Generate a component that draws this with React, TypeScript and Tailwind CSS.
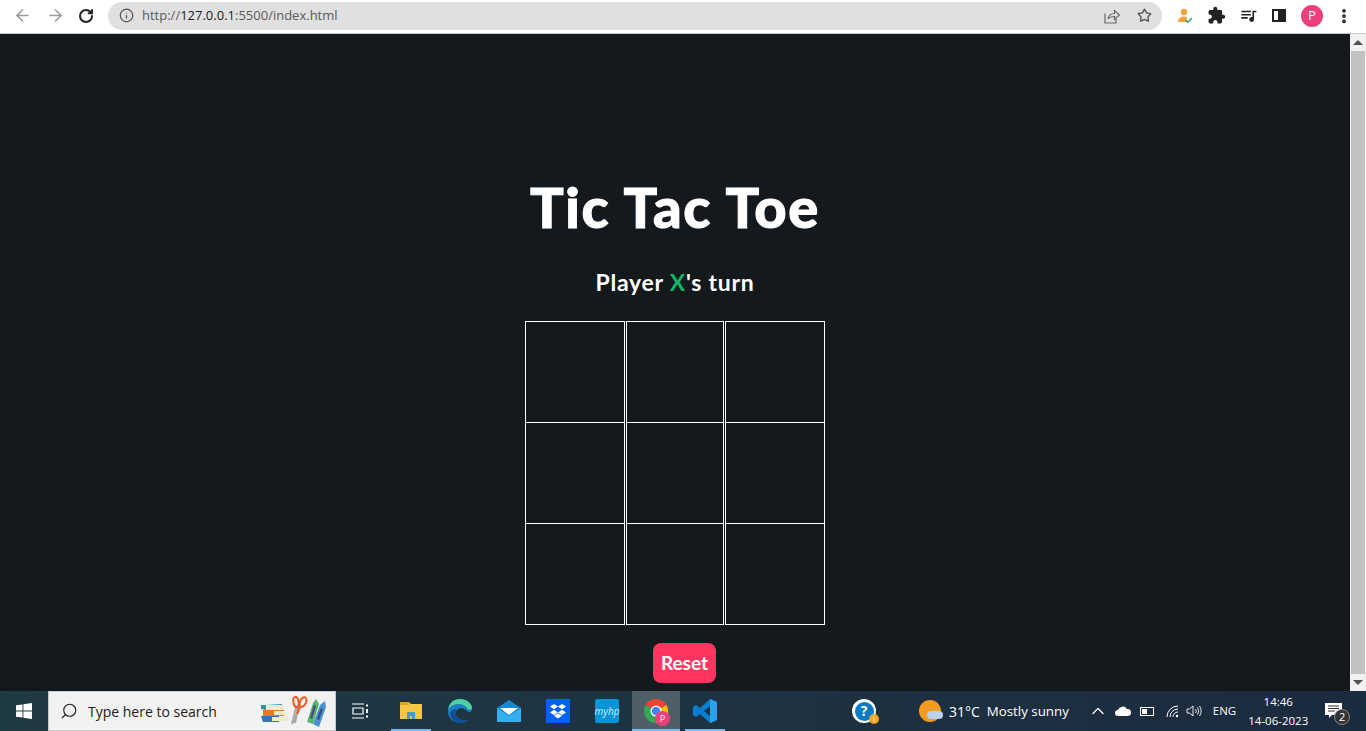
import type { ReactNode } from 'react';
import { ArrowLeft, ArrowRight, RotateCw, Info, Star, EllipsisVertical, Search, ChevronUp } from 'lucide-react';

const cellIds = [0, 1, 2, 3, 4, 5, 6, 7, 8];

const BrowserBar = () => (
  <div className="h-[34px] bg-white flex items-center border-b border-[#c8c8c8] text-[#5f6368] pb-[2px]">
    <div className="flex items-center w-[108px] pl-[13px] gap-[14px]">
      <ArrowLeft size={19} className="text-[#9a9a9a]" />
      <ArrowRight size={19} className="text-[#9a9a9a]" />
      <RotateCw size={16} strokeWidth={3} className="text-[#222] -ml-[1px]" />
    </div>
    <div className="w-[1054px] h-[28px] rounded-full bg-[#e0e0e0] flex items-center pl-[11px] pr-[10px]">
      <Info size={15} className="text-[#555]" />
      <span className="ml-[8px] text-[13px] text-[#5a5a5a]">
        http://<span className="text-[#222]">127.0.0.1</span>:5500/index.html
      </span>
      <svg width="16" height="16" viewBox="0 0 16 16" fill="none" stroke="#666" strokeWidth="1.2" className="ml-auto">
        <path d="M1 5.5v9.5h11v-4" />
        <path d="M4 11c.5-3.5 3-5.5 6.5-5.5V2.5L15.5 7l-5 4.5V8.5C8 8.5 5.5 9 4 11z" />
      </svg>
      <Star size={15} strokeWidth={2.2} className="ml-[17px] text-[#555]" />
    </div>
    <div className="flex items-center flex-1 pl-[14px]">
      <svg width="18" height="18" viewBox="0 0 18 18">
        <circle cx="8" cy="5" r="3.2" fill="#f9a03f" />
        <path d="M2 15c0-4 3-5.5 6-5.5 1 0 2 .2 3 .6v4.9z" fill="#f9a03f" />
        <path d="M9.5 13l2.2 2.2 4-4" stroke="#1fa463" strokeWidth="1.6" fill="none" />
      </svg>
      <svg width="19" height="19" viewBox="0 0 24 24" fill="#222" className="ml-[13px]">
        <path d="M20.5 11H19V7c0-1.1-.9-2-2-2h-4V3.5C13 2.12 11.88 1 10.5 1S8 2.12 8 3.5V5H4c-1.1 0-1.99.9-1.99 2v3.8H3.5c1.49 0 2.7 1.21 2.7 2.7s-1.21 2.7-2.7 2.7H2V20c0 1.1.9 2 2 2h3.8v-1.5c0-1.49 1.21-2.7 2.7-2.7 1.49 0 2.7 1.21 2.7 2.7V22H17c1.1 0 2-.9 2-2v-4h1.5c1.38 0 2.5-1.12 2.5-2.5S21.88 11 20.5 11z" />
      </svg>
      <svg width="19" height="19" viewBox="0 0 24 24" fill="#222" className="ml-[13px]">
        <path d="M15 6H3v2h12V6zm0 4H3v2h12v-2zM3 16h8v-2H3v2zM17 6v8.18c-.31-.11-.65-.18-1-.18-1.66 0-3 1.34-3 3s1.34 3 3 3 3-1.34 3-3V8h3V6h-5z" />
      </svg>
      <div className="ml-[14px] w-[14px] h-[13px] border-2 border-[#222] flex justify-end">
        <div className="w-[6px] h-full bg-[#222]" />
      </div>
      <div className="ml-[15px] w-[22px] h-[22px] rounded-full bg-[#ec407a] text-white text-[13px] flex items-center justify-center">P</div>
      <EllipsisVertical size={18} strokeWidth={3} className="ml-[12px] text-[#222]" />
    </div>
  </div>
);

const Scrollbar = () => (
  <div className="w-[16px] bg-[#f1f1f1] flex flex-col items-center">
    <div className="h-[17px] flex items-center">
      <div className="w-0 h-0 border-x-[5px] border-x-transparent border-b-[5px] border-b-[#505050]" />
    </div>
    <div className="w-[14px] flex-1 bg-[#c1c1c1]" />
    <div className="h-[17px] flex items-center">
      <div className="w-0 h-0 border-x-[5px] border-x-transparent border-t-[5px] border-t-[#505050]" />
    </div>
  </div>
);

const Game = () => (
  <div className="flex-1 bg-[#14191e] flex flex-col items-center pt-[139px] font-['Lato',sans-serif] text-white">
    <h1 className="text-[56px] leading-[68px] font-black tracking-[1.7px] [-webkit-text-stroke:1px_#fff]">Tic Tac Toe</h1>
    <p className="mt-[26px] text-[23px] leading-[30px] font-bold tracking-[0.75px]">
      Player <span className="text-[#10b866]">X</span>'s turn
    </p>
    <div className="mt-[24px] grid grid-cols-[100px_98px_100px] gap-x-px w-[300px]">
      {cellIds.map((id) => (
        <div key={id} className={`border-x border-t border-white ${id >= 6 ? 'h-[102px] border-b' : 'h-[101px]'}`} />
      ))}
    </div>
    <button className="mt-[18px] ml-[18px] w-[63px] h-[40px] rounded-[8px] bg-[#ff3560] text-[19px] font-bold pt-[1px] pl-[1px]">Reset</button>
  </div>
);

const TaskbarApp = ({ children, active, open }: { children: ReactNode; active?: boolean; open?: boolean }) => (
  <div className={`w-[48px] h-[40px] flex items-center justify-center relative ${active ? 'bg-[#4f5f68]' : ''}`}>
    {children}
    {open && <div className={`absolute bottom-0 h-[2px] bg-[#76b9ed] ${active ? 'left-0 right-0' : 'left-[4px] right-[4px]'}`} />}
  </div>
);

const SearchArt = () => (
  <svg width="70" height="32" viewBox="0 0 70 32" className="ml-auto mr-[5px]">
    <path d="M1 10h5l16-1v6H6l-5-1z" fill="#3f8f94" />
    <path d="M6 10h18v5H6z" fill="#efe9cf" />
    <path d="M3 15h21v6H3z" fill="#e8791c" />
    <path d="M14 16h13v4H14z" fill="#efe9cf" />
    <path d="M1 21h18v6H3z" fill="#3b6fb5" />
    <path d="M12 22h17v4H12z" fill="#efe9cf" />
    <path d="M32 29 36 13l2-1-1 7zM38 12l-1 7-2 9" stroke="#a9a9a9" strokeWidth="2" fill="none" />
    <ellipse cx="36" cy="7" rx="2.6" ry="5" fill="none" stroke="#f0591e" strokeWidth="2" transform="rotate(-10 36 7)" />
    <ellipse cx="43" cy="7" rx="3" ry="5" fill="none" stroke="#f0591e" strokeWidth="2" transform="rotate(25 43 7)" />
    <path d="M40 12 37 19" stroke="#f0591e" strokeWidth="2" />
    <path d="M47 27 53 8l3-4 3 5-6 20z" fill="#58b368" />
    <path d="M50 23l4-13 2 1-4 13z" fill="#4a4a80" />
    <path d="M53 29 60 10l5-4 1 6-7 20z" fill="#4a8fd1" />
    <path d="M57 24l4-11 2 1-4 11z" fill="#3a4a80" />
  </svg>
);

const Taskbar = () => (
  <div className="h-[40px] bg-gradient-to-r from-[#203a44] to-[#1b2b3f] flex items-center text-white font-['Open_Sans',sans-serif]">
    <div className="w-[48px] flex justify-center">
      <svg width="16" height="16" viewBox="0 0 16 16" fill="#fff">
        <path d="M0 2.3 6.5 1.4v6.2H0zM7.4 1.3 16 0v7.6H7.4zM0 8.4h6.5v6.2L0 13.7zM7.4 8.4H16V16l-8.6-1.3z" />
      </svg>
    </div>
    <div className="w-[288px] h-[40px] bg-[#f2f2f2] border border-[#c9c9c9] flex items-center pl-[11px] text-[#222]">
      <Search size={18} strokeWidth={1.5} className="-scale-x-100" />
      <span className="ml-[10px] text-[14px]">Type here to search</span>
      <SearchArt />
    </div>
    <div className="w-[48px] flex justify-center">
      <svg width="18" height="16" viewBox="0 0 18 16" fill="none" stroke="#fff" strokeWidth="1.2">
        <path d="M1 1h12M1 15h12M2 5h10v6H2z" />
        <rect x="15" y="1.5" width="2" height="2" fill="#fff" stroke="none" />
        <rect x="15" y="6" width="2" height="4" fill="#fff" stroke="none" />
        <rect x="15" y="12.5" width="2" height="2" fill="#fff" stroke="none" />
      </svg>
    </div>
    <div className="flex items-center gap-[1px] ml-[3px]">
      <TaskbarApp open>
        <svg width="22" height="20" viewBox="0 0 22 20">
          <path d="M0 1h9l2 2h11v15H0z" fill="#f6c744" />
          <rect x="0" y="1" width="9" height="3" fill="#d9a528" />
          <path d="M7 11h8v7h-3v-3H10v3H7z" fill="#3e9ad6" />
        </svg>
      </TaskbarApp>
      <TaskbarApp>
        <svg width="24" height="24" viewBox="0 0 24 24">
          <path d="M12 0C5 0 0 5 0 12c0 7 5 12 12 12 3 0 6-1 8-3-6 2-11-1-12-5-1-4 2-7 5-7 3 0 5 2 6 3 2 2 5 1 5-3C24 4 18 0 12 0z" fill="#1b7fc4" />
          <path d="M12 0C6 0 1 4 .5 10 3 6 8 4.5 12 5c4 .5 7 3 8 5 1.5 1.5 4 1 4-1C24 4 18 0 12 0z" fill="#4fd0a0" />
          <path d="M2 14c0 6 5 10 11 10 3 0 5-1 7-3-5 1-10-1-12-5-1-3 0-5 1-6-3 0-6 1-7 4z" fill="#0f4f8f" />
        </svg>
      </TaskbarApp>
      <TaskbarApp>
        <svg width="24" height="22" viewBox="0 0 24 22">
          <path d="M0 8 12 0l12 8v14H0z" fill="#1587d6" />
          <path d="M3 8h18l-9 7z" fill="#fff" />
          <path d="M0 8l12 8 12-8v14H0z" fill="#35b0ee" />
        </svg>
      </TaskbarApp>
      <TaskbarApp>
        <div className="w-[24px] h-[24px] bg-[#0061fe] flex items-center justify-center">
          <svg width="16" height="15" viewBox="0 0 16 15" fill="#fff">
            <path d="M4 0 8 2.6 4 5.2 0 2.6zM12 0l4 2.6-4 2.6L8 2.6zM4 5.8l4 2.6-4 2.6-4-2.6zM12 5.8l4 2.6-4 2.6-4-2.6zM4 11.8 8 9.2l4 2.6L8 14.4z" />
          </svg>
        </div>
      </TaskbarApp>
      <TaskbarApp>
        <div className="w-[24px] h-[24px] bg-[#0096d6] rounded-[2px] flex items-center justify-center text-[10px] italic text-[#d5eefa]">myhp</div>
      </TaskbarApp>
      <TaskbarApp active open>
        <div className="relative w-[24px] h-[24px]">
          <svg width="24" height="24" viewBox="0 0 24 24">
            <path d="M12 12 1.6 6A12 12 0 0 1 22.4 6z" fill="#ea4335" />
            <path d="M12 12 22.4 6A12 12 0 0 1 12 24z" fill="#fbbc05" />
            <path d="M12 12 12 24A12 12 0 0 1 1.6 6z" fill="#34a853" />
            <circle cx="12" cy="12" r="5.5" fill="#fff" />
            <circle cx="12" cy="12" r="4.3" fill="#4285f4" />
          </svg>
          <div className="absolute -right-[2px] -bottom-[3px] w-[15px] h-[15px] rounded-full bg-[#ec407a] text-[9px] flex items-center justify-center">P</div>
        </div>
      </TaskbarApp>
      <TaskbarApp open>
        <svg width="24" height="24" viewBox="0 0 24 24">
          <path d="M17 0 24 3v18l-7 3-10-9-4 3-3-2V8l3-2 4 3zM17 7l-6 5 6 5z" fill="#0a7fd0" />
          <path d="M17 0 24 3v18l-7 3z" fill="#2ba0ea" />
        </svg>
      </TaskbarApp>
    </div>
    <div className="ml-[123px] w-[24px] h-[24px] relative">
      <div className="w-[24px] h-[24px] rounded-full bg-white flex items-center justify-center">
        <div className="w-[19px] h-[19px] rounded-full bg-[#0a7bc2] text-white text-[14px] font-bold leading-none flex items-center justify-center">?</div>
      </div>
      <div className="absolute right-[-3px] bottom-[-1px] w-[10px] h-[10px] rounded-full bg-[#f5a623] text-[8px] leading-[10px] text-center">!</div>
    </div>
    <div className="ml-[43px] relative w-[22px] h-[22px] rounded-full bg-[#f59a23]">
      <div className="absolute right-[-2px] bottom-[3px] w-[16px] h-[8px] rounded-full bg-[#b9d2ee]" />
    </div>
    <span className="ml-[8px] text-[14px]">31°C</span>
    <span className="ml-[7px] text-[13.3px] pt-[1px]">Mostly sunny</span>
    <ChevronUp size={20} strokeWidth={1.5} className="ml-[19px]" />
    <svg width="16" height="10" viewBox="0 0 16 10" fill="#fff" className="ml-[7px]">
      <path d="M3 10a3 3 0 0 1 0-6 5 5 0 0 1 9-1 3.5 3.5 0 0 1 1 7z" />
    </svg>
    <div className="ml-[9px] w-[14px] h-[9px] border border-white p-[1px]">
      <div className="w-[5px] h-full bg-white" />
    </div>
    <svg width="14" height="13" viewBox="0 0 14 13" fill="none" stroke="#fff" className="ml-[12px]">
      <path d="M1 12a11 11 0 0 1 11-11M4 12a8 8 0 0 1 8-8M7 12a5 5 0 0 1 5-5" />
      <circle cx="11" cy="11" r="1.2" fill="#fff" stroke="none" />
    </svg>
    <svg width="16" height="14" viewBox="0 0 16 14" fill="none" stroke="#fff" className="ml-[6px]">
      <path d="M1 5h2.5L7 2v10L3.5 9H1zM9.5 5a3 3 0 0 1 0 4M11.5 3.5a6 6 0 0 1 0 7M13.5 2a9 9 0 0 1 0 10" strokeWidth="0.9" />
    </svg>
    <span className="ml-[11px] text-[11.5px]">ENG</span>
    <div className="ml-[12px] w-[60px] text-center text-[11.5px] leading-[19px]">
      <div>14:46</div>
      <div>14-06-2023</div>
    </div>
    <div className="ml-[17px] relative">
      <svg width="17" height="16" viewBox="0 0 17 16">
        <path d="M0 0h17v12H7l-3 3v-3H0z" fill="#fff" />
        <path d="M3 3h11M3 5.5h11M3 8h7" stroke="#333" strokeWidth="1" />
      </svg>
      <div className="absolute -right-[8px] -bottom-[6px] w-[16px] h-[16px] rounded-full bg-[#333] border border-[#888] text-[11px] flex items-center justify-center">2</div>
    </div>
  </div>
);

export default function App() {
  return (
    <div className="h-[731px] w-[1366px] flex flex-col overflow-hidden font-['Open_Sans',sans-serif]">
      <BrowserBar />
      <div className="flex-1 flex">
        <Game />
        <Scrollbar />
      </div>
      <Taskbar />
    </div>
  );
}
